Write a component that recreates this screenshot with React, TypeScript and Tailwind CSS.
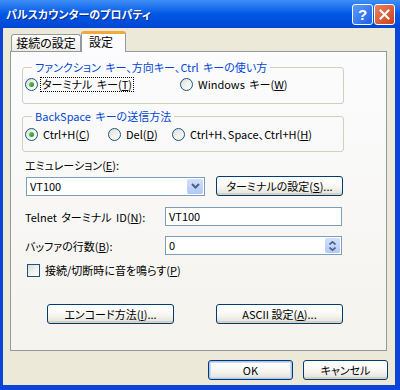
import { ReactNode } from 'react';

function Radio({ checked }: { checked?: boolean }) {
  return (
    <span className="w-[13px] h-[13px] rounded-full border border-[#1C5180] bg-gradient-to-br from-[#DCDCD4] via-[#F2F2EE] to-white flex items-center justify-center shrink-0">
      {checked && (
        <span className="w-[5px] h-[5px] rounded-full bg-gradient-to-br from-[#63D35F] to-[#1F8A1C]" />
      )}
    </span>
  );
}

function RadioItem({ checked, focus, className, children }: { checked?: boolean; focus?: boolean; className?: string; children: ReactNode }) {
  return (
    <div className={`flex items-center gap-[3px] ${className ?? ''}`}>
      <Radio checked={checked} />
      <span className={`px-[1px] leading-[13px] ${focus ? 'outline outline-1 outline-dotted outline-black' : 'border border-transparent'}`}>
        {children}
      </span>
    </div>
  );
}

function U({ children }: { children: ReactNode }) {
  return <span className="underline underline-offset-[1px]">{children}</span>;
}

function XpButton({ children, className, isDefault }: { children: ReactNode; className?: string; isDefault?: boolean }) {
  return (
    <button
      className={`h-[20px] rounded-[3px] border border-[#003C74] bg-gradient-to-b from-white via-[#F8F8F4] to-[#E3E1D6] flex items-center justify-center leading-none ${
        isDefault ? 'shadow-[inset_0_0_0_1px_#A9C4F0,inset_0_0_0_2px_#CEDCF6]' : 'shadow-[inset_0_-2px_0_#D6D0C5]'
      } ${className ?? ''}`}
    >
      {children}
    </button>
  );
}

export default function App() {
  return (
    <div className="w-[400px] h-[390px] flex flex-col font-['Noto_Sans_CJK_JP','Noto_Sans',sans-serif] text-[11px] text-black [font-feature-settings:'palt'] [word-spacing:2px] overflow-hidden">
      {/* Title bar */}
      <div className="h-[28px] shrink-0 flex items-center bg-gradient-to-b from-[#3D8EF6] via-[#0057E6] to-[#0046D2] pl-[6px] pr-[6px]">
        <span className="text-white font-bold text-[11px] leading-none [text-shadow:1px_1px_0_#0B2B8C]">
          パルスカウンターのプロパティ
        </span>
        <div className="ml-auto flex gap-[1px] mr-[-1px]">
          <div className="w-[21px] h-[21px] rounded-[3px] border border-white bg-gradient-to-br from-[#5E9BFF] to-[#1D5FE0] flex items-center justify-center text-white font-bold text-[15px] leading-none font-['Liberation_Sans',sans-serif]">
            ?
          </div>
          <div className="w-[21px] h-[21px] rounded-[3px] border border-white bg-gradient-to-br from-[#E9835F] to-[#CB3C15] flex items-center justify-center">
            <svg width="11" height="11" viewBox="0 0 11 11">
              <path d="M1.5 1.5 L9.5 9.5 M9.5 1.5 L1.5 9.5" stroke="white" strokeWidth="2" strokeLinecap="square" />
            </svg>
          </div>
        </div>
      </div>

      {/* Window body */}
      <div className="flex-1 flex flex-col bg-[#ECE9D8] border-l-[3px] border-r-[5px] border-b-[5px] border-[#0A45D8]">
        {/* Tabs */}
        <div className="flex items-end h-[23px] pl-[8px]">
          <div className="h-[17px] w-[70px] border border-b-0 border-[#919B9C] rounded-t-[3px] bg-gradient-to-b from-white to-[#ECEBE5] flex items-center justify-center leading-none text-[12px]">
            接続の設定
          </div>
          <div className="h-[21px] w-[45px] border border-b-0 border-[#919B9C] border-t-[3px] border-t-[#F2A93B] rounded-t-[3px] bg-[#FCFCFE] flex items-start pl-[7px] pt-[2px] leading-none mb-[-1px] relative z-10 text-[12px]">
            設定
          </div>
        </div>

        {/* Panel */}
        <div className="ml-[7px] w-[377px] h-[300px] border border-[#919B9C] bg-gradient-to-b from-[#FCFCFE] to-[#F4F3EE] flex flex-col">
          <fieldset className="ml-[11px] mt-[8px] w-[322px] border border-[#D0D0BF] rounded-[3px] pt-[3px] pb-[12px] pl-[2px]">
            <legend className="ml-[7px] px-[3px] text-[#0046D5] leading-[14px]">
              ファンクション キー、方向キー、Ctrl キーの使い方
            </legend>
            <div className="flex items-center h-[14px]">
              <RadioItem checked focus className="w-[155px]">
                ターミナル キー(<U>T</U>)
              </RadioItem>
              <RadioItem>
                Windows キー(<U>W</U>)
              </RadioItem>
            </div>
          </fieldset>

          <fieldset className="ml-[11px] mt-[5px] w-[322px] border border-[#D0D0BF] rounded-[3px] pt-[4px] pb-[10px] pl-[2px]">
            <legend className="ml-[7px] px-[3px] text-[#0046D5] leading-[14px]">BackSpace キーの送信方法</legend>
            <div className="flex items-center h-[14px]">
              <RadioItem checked className="w-[83px]">
                Ctrl+H(<U>C</U>)
              </RadioItem>
              <RadioItem className="w-[64px]">
                Del(<U>D</U>)
              </RadioItem>
              <RadioItem>
                Ctrl+H、Space、Ctrl+H(<U>H</U>)
              </RadioItem>
            </div>
          </fieldset>

          <div className="ml-[14px] mt-[6px] leading-[14px]">
            エミュレーション(<U>E</U>):
          </div>

          <div className="ml-[15px] mt-[4px] flex items-center gap-[11px]">
            <div className="w-[179px] h-[19px] border border-[#7F9DB9] bg-white flex items-center">
              <span className="pl-[3px] flex-1 leading-none">VT100</span>
              <div className="w-[16px] h-[15px] mr-[1px] rounded-[2px] bg-gradient-to-b from-[#D3E0FD] to-[#B1C8F8] flex items-center justify-center">
                <svg width="9" height="6" viewBox="0 0 9 6">
                  <path d="M1 1 L4.5 4.5 L8 1" stroke="#4D6185" strokeWidth="2" fill="none" />
                </svg>
              </div>
            </div>
            <XpButton className="w-[127px]">
              ターミナルの設定(<U>S</U>)...
            </XpButton>
          </div>

          <div className="ml-[14px] mt-[11px] flex items-center">
            <span className="w-[140px] leading-[14px]">
              Telnet ターミナル ID(<U>N</U>):
            </span>
            <div className="w-[177px] h-[19px] border border-[#7F9DB9] bg-white flex items-center pl-[3px] leading-none">
              VT100
            </div>
          </div>

          <div className="ml-[14px] mt-[10px] flex items-center">
            <span className="w-[140px] leading-[14px]">
              バッファの行数(<U>B</U>):
            </span>
            <div className="w-[177px] h-[19px] border border-[#7F9DB9] bg-white flex items-center">
              <span className="pl-[3px] flex-1 leading-none">0</span>
              <div className="w-[15px] h-[15px] mr-[1px] rounded-[2px] bg-gradient-to-b from-[#D3E0FD] to-[#B1C8F8] flex flex-col items-center justify-center gap-[2px]">
                <svg width="7" height="4" viewBox="0 0 7 4">
                  <path d="M0.5 3.5 L3.5 0.8 L6.5 3.5" stroke="#4D6185" strokeWidth="1.6" fill="none" />
                </svg>
                <svg width="7" height="4" viewBox="0 0 7 4">
                  <path d="M0.5 0.5 L3.5 3.2 L6.5 0.5" stroke="#4D6185" strokeWidth="1.6" fill="none" />
                </svg>
              </div>
            </div>
          </div>

          <div className="ml-[16px] mt-[8px] flex items-center gap-[5px]">
            <span className="w-[13px] h-[13px] border border-[#1C5180] bg-gradient-to-br from-[#DCDCD4] via-[#F2F2EE] to-white shrink-0" />
            <span className="leading-[14px]">
              接続/切断時に音を鳴らす(<U>P</U>)
            </span>
          </div>

          <div className="ml-[36px] mt-[27px] flex gap-[42px]">
            <XpButton className="w-[127px]">
              エンコード方法(<U>I</U>)...
            </XpButton>
            <XpButton className="w-[127px]">
              ASCII 設定(<U>A</U>)...
            </XpButton>
          </div>
        </div>

        {/* Dialog buttons */}
        <div className="mt-[9px] flex justify-end gap-[10px] pr-[7px]">
          <XpButton isDefault className="w-[85px]">
            OK
          </XpButton>
          <XpButton className="w-[85px]">キャンセル</XpButton>
        </div>
      </div>
    </div>
  );
}
